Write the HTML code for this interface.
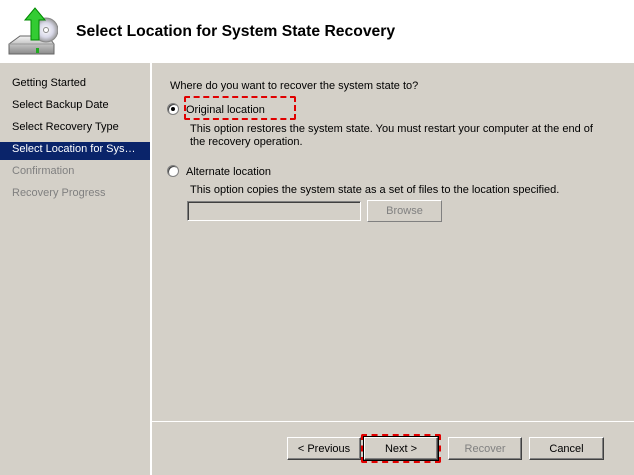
<!DOCTYPE html>
<html><head><meta charset="utf-8"><style>
*{margin:0;padding:0;box-sizing:border-box}
body{width:634px;height:475px;position:relative;overflow:hidden;background:#d4d0c8;font-family:"Liberation Sans",sans-serif;font-size:11px;color:#000}
.a{position:absolute;white-space:nowrap}
.hdr{left:0;top:0;width:634px;height:63px;background:#fff}
.title{left:76px;top:23px;font-size:15.7px;font-weight:bold}
.vl{left:150px;top:63px;width:2px;height:412px;background:#fff}
.hl{left:152px;top:421px;width:482px;height:1px;background:#fff}
.nav{left:12px}
.sel{left:0;top:142px;width:150px;height:18px;background:#0a246a}
.dis{color:#808080}
.radio{width:12px;height:12px;border-radius:50%;background:#fff;border:1px solid #808080;box-shadow:inset 1px 1px 0 #404040}
.dot{position:absolute;left:3px;top:3px;width:4px;height:4px;border-radius:50%;background:#000}
.btn{height:23px;background:#d4d0c8;border:1px solid;border-color:#fff #404040 #404040 #fff;box-shadow:inset -1px -1px 0 #808080;text-align:center;line-height:22px}
.dash{border:2px dashed #e00000;border-radius:2px}
</style></head><body>
<div class="a hdr"></div>
<svg class="a" style="left:6px;top:4px" width="52" height="52" viewBox="0 0 52 52">
<defs><linearGradient id="g" x1="0" y1="0" x2="0" y2="1"><stop offset="0" stop-color="#f4f4f4"/><stop offset="1" stop-color="#8a8a8a"/></linearGradient>
<radialGradient id="c"><stop offset="0" stop-color="#fff"/><stop offset=".6" stop-color="#d8d8e8"/><stop offset="1" stop-color="#999"/></radialGradient></defs>
<path d="M3 40 L14 32 L42 32 L48 40 L48 50 L3 50 Z" fill="url(#g)" stroke="#666" stroke-width="1"/>
<path d="M3 40 L48 40" stroke="#999"/>
<rect x="30" y="44" width="3" height="5" fill="#2a2"/>
<circle cx="40" cy="26" r="12" fill="url(#c)" stroke="#888"/>
<circle cx="40" cy="26" r="2.5" fill="#fff" stroke="#888"/>
<path d="M25 36 L25 16 L19 16 L29 4 L39 16 L33 16 L33 36 Z" fill="#3c3" stroke="#080" stroke-width="1"/>
</svg>
<div class="a title">Select Location for System State Recovery</div>
<div class="a vl"></div>
<div class="a hl"></div>
<div class="a sel"></div>
<div class="a nav" style="top:77px">Getting Started</div>
<div class="a nav" style="top:99px">Select Backup Date</div>
<div class="a nav" style="top:121px">Select Recovery Type</div>
<div class="a nav" style="top:143px;color:#fff">Select Location for Sys…</div>
<div class="a nav dis" style="top:165px">Confirmation</div>
<div class="a nav dis" style="top:187px">Recovery Progress</div>

<div class="a" style="left:170px;top:80px">Where do you want to recover the system state to?</div>
<div class="a radio" style="left:167px;top:103px"><div class="dot"></div></div>
<div class="a dash" style="left:184px;top:96px;width:112px;height:24px"></div>
<div class="a" style="left:186px;top:104px">Original location</div>
<div class="a" style="left:190px;top:123px">This option restores the system state. You must restart your computer at the end of</div>
<div class="a" style="left:190px;top:136px">the recovery operation.</div>
<div class="a radio" style="left:167px;top:165px"></div>
<div class="a" style="left:186px;top:166px">Alternate location</div>
<div class="a" style="left:190px;top:184px">This option copies the system state as a set of files to the location specified.</div>
<div class="a" style="left:187px;top:201px;width:174px;height:20px;border:1px solid;border-color:#808080 #fff #fff #808080;box-shadow:inset 1px 1px 0 #404040"></div>
<div class="a btn dis" style="left:367px;top:200px;width:75px;height:22px;line-height:21px;border-color:#fff #808080 #808080 #fff;box-shadow:none">Browse</div>

<div class="a btn" style="left:287px;top:437px;width:74px">&lt; Previous</div>
<div class="a btn" style="left:364px;top:437px;width:74px;outline:1px solid #000">Next &gt;</div>
<div class="a dash" style="left:361px;top:434px;width:80px;height:29px"></div>
<div class="a btn dis" style="left:448px;top:437px;width:74px">Recover</div>
<div class="a btn" style="left:529px;top:437px;width:75px">Cancel</div>
</body></html>
